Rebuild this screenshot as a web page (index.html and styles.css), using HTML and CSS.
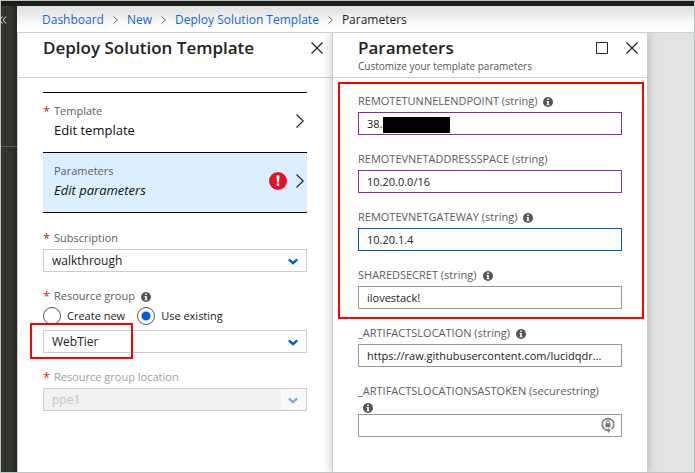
FILE: index.html
```html
<!DOCTYPE html>
<html lang="en">
<head>
<meta charset="utf-8">
<title>Parameters</title>
<link rel="stylesheet" href="styles.css">
</head>
<body>
<svg class="defs" aria-hidden="true">
  <symbol id="info" viewBox="0 0 10 10"><circle cx="5" cy="5" r="5" fill="#555"/><path d="M4.2 1.5h1.6v1.6H4.2zM3.6 4h2.2v3.4h.7v.9h-3v-.9h.7V4.9h-.6z" fill="#fff"/></symbol>
  <symbol id="close" viewBox="0 0 12 12"><path d="M.5.5l11 11M11.5.5l-11 11" fill="none" stroke="#222" stroke-width="1.2"/></symbol>
  <symbol id="next" viewBox="0 0 8 14"><path d="M.5.5L7.2 7 .5 13.5" fill="none" stroke="#222" stroke-width="1.2"/></symbol>
  <symbol id="sep" viewBox="0 0 5 8"><path d="M.5.5L4.4 4 .5 7.5" fill="none" stroke="#666"/></symbol>
  <symbol id="down" viewBox="0 0 10 7"><path d="M.8 1.3L5 5.2l4.2-3.9" fill="none" stroke="currentColor" stroke-width="2.4"/></symbol>
</svg>
<div class="portal">
  <div class="topbar"></div>
  <div class="body">
    <nav class="sidebar" aria-label="Menu">
      <button class="collapse" aria-label="Expand menu"><svg width="8" height="8" viewBox="0 0 8 8"><path d="M3.5.5L.5 4l3 3.5M7 .5L4 4l3 3.5" fill="none" stroke="#ddd"/></svg></button>
    </nav>
    <main class="main">
      <nav class="crumbs" aria-label="Breadcrumb">
        <a href="#">Dashboard</a><svg width="5" height="8"><use href="#sep"/></svg>
        <a href="#">New</a><svg width="5" height="8"><use href="#sep"/></svg>
        <a href="#">Deploy Solution Template</a><svg width="5" height="8"><use href="#sep"/></svg>
        <span>Parameters</span>
      </nav>
      <div class="blades">
        <section class="blade">
          <header class="head">
            <h1>Deploy Solution Template</h1>
            <div class="tools"><button aria-label="Close"><svg width="12" height="12"><use href="#close"/></svg></button></div>
          </header>
          <div class="content deploy">
            <div class="steps">
              <button class="step">
                <span class="star">*</span>
                <span class="text"><span class="name">Template</span><span class="value">Edit template</span></span>
                <svg width="8" height="14"><use href="#next"/></svg>
              </button>
              <button class="step selected">
                <span class="star"></span>
                <span class="text"><span class="name">Parameters</span><em class="value">Edit parameters</em></span>
                <svg class="error" width="18" height="18" viewBox="0 0 18 18"><circle cx="9" cy="9" r="9" fill="#e81123"/><path d="M7.5 3.5h3l-.5 7H8zM7.8 11.6h2.4v2.4H7.8z" fill="#fff"/></svg>
                <svg width="8" height="14"><use href="#next"/></svg>
              </button>
            </div>
            <div class="field">
              <label class="label" for="sub"><span class="star">*</span>Subscription</label>
              <div class="select"><select id="sub"><option>walkthrough</option></select><svg width="10" height="7"><use href="#down"/></svg></div>
            </div>
            <div class="field">
              <label class="label" for="rg"><span class="star">*</span>Resource group<svg class="info" width="10" height="10"><use href="#info"/></svg></label>
              <div class="radios">
                <label><input type="radio" name="mode">Create new</label>
                <label><input type="radio" name="mode" checked>Use existing</label>
              </div>
              <div class="select marked"><select id="rg"><option>WebTier</option></select><svg width="10" height="7"><use href="#down"/></svg></div>
            </div>
            <div class="field disabled">
              <label class="label" for="loc"><span class="star">*</span>Resource group location</label>
              <div class="select"><select id="loc" disabled><option>ppe1</option></select><svg width="10" height="7"><use href="#down"/></svg></div>
            </div>
          </div>
        </section>
        <section class="blade">
          <header class="head">
            <h1>Parameters</h1>
            <p>Customize your template parameters</p>
            <div class="tools">
              <button aria-label="Maximize"><svg width="12" height="12" viewBox="0 0 12 12"><path d="M.5.5h11v11H.5z" fill="none" stroke="#222"/></svg></button>
              <button aria-label="Close"><svg width="12" height="12"><use href="#close"/></svg></button>
            </div>
          </header>
          <div class="content params">
            <div class="group">
              <div class="field">
                <label class="label" for="p1">REMOTETUNNELENDPOINT (string)<svg class="info" width="10" height="10"><use href="#info"/></svg></label>
                <div class="box"><input class="edited" id="p1" type="text" value="38."><span class="redacted"></span></div>
              </div>
              <div class="field">
                <label class="label" for="p2">REMOTEVNETADDRESSSPACE (string)</label>
                <div class="box"><input class="edited" id="p2" type="text" value="10.20.0.0/16"></div>
              </div>
              <div class="field">
                <label class="label" for="p3">REMOTEVNETGATEWAY (string)<svg class="info" width="10" height="10"><use href="#info"/></svg></label>
                <div class="box"><input class="active" id="p3" type="text" value="10.20.1.4"></div>
              </div>
              <div class="field">
                <label class="label" for="p4">SHAREDSECRET (string)<svg class="info" width="10" height="10"><use href="#info"/></svg></label>
                <div class="box"><input id="p4" type="text" value="ilovestack!"></div>
              </div>
            </div>
            <div class="field">
              <label class="label" for="p5">_ARTIFACTSLOCATION (string)<svg class="info" width="10" height="10"><use href="#info"/></svg></label>
              <div class="box"><input id="p5" type="text" value="https://raw.githubusercontent.com/lucidqdr..."></div>
            </div>
            <div class="field">
              <label class="label wrap" for="p6"><span>_ARTIFACTSLOCATIONSASTOKEN (securestring)</span><svg class="info" width="10" height="10"><use href="#info"/></svg></label>
              <div class="box"><input id="p6" type="password"><svg class="lock" width="14" height="16" viewBox="0 0 14 16"><path d="M3.5 12A5.8 5.8 0 1 1 10.5 12" fill="none" stroke="#888" stroke-width="1.8"/><path d="M4.5 6.3h5v4h-5z" fill="#777"/><path d="M5.4 7V5.2a1.6 1.6 0 0 1 3.2 0V7" fill="none" stroke="#777"/><path d="M3.8 11.5L7 12.2V10.8l3 2.6-3 2.6v-1.6l-3.6-1z" fill="#888"/></svg></div>
            </div>
          </div>
        </section>
        <div class="rest"></div>
      </div>
    </main>
  </div>
</div>
</body>
</html>
```
FILE: styles.css
```css
*, ::before, ::after { box-sizing: border-box; }
body {
  margin: 0;
  font: 12px/16px "Open Sans", "Noto Sans", sans-serif;
  color: #222;
}
button { border: 0; padding: 0; background: none; font: inherit; color: inherit; text-align: left; }
svg { display: block; flex: none; }
.defs { position: absolute; width: 0; height: 0; }

.portal { display: flex; flex-direction: column; min-height: 100vh; border: 1px solid #bfc3bf; }
.topbar { height: 5px; background: #1c1e1c; }
.body { flex: 1; display: flex; }
.sidebar { width: 16px; background: linear-gradient(to right, #33342e 60%, #252622); }
.collapse { display: block; width: 100%; height: 141px; border-bottom: 1px solid #5a5b57; }
.collapse svg { margin: 0 0 112px -2px; }
.main { flex: 1; min-width: 0; display: flex; flex-direction: column; }

.crumbs {
  display: flex; align-items: center; gap: 9px;
  height: 27px; padding: 2px 0 0 25px;
  background: linear-gradient(#dedede, #fff 80%);
  border-bottom: 1px solid #cfcfcf;
}
.crumbs a { color: #1465dc; text-decoration: none; }

.blades { flex: 1; display: grid; grid-template-columns: 315fr 315fr 47fr; }
.blade { background: #fff; border-left: 1px solid #ccc; }
.blade + .blade { box-shadow: 0 0 10px rgba(0, 0, 0, .25); clip-path: inset(0 -12px 0 -12px); }
.rest { background: #e3e3e3; }
.head { position: relative; height: 45px; padding: 5px 0 0 25px; border-bottom: 1px solid #d0d0d0; }
.head h1 { margin: 0; font-size: 17px; line-height: 20px; font-weight: 600; }
.head p { margin: 0; font-size: 10px; line-height: 16px; color: #555; }
.tools { position: absolute; top: 9px; right: 9px; display: flex; gap: 18px; }
.content { padding: 14px 25px 0; }
.params { padding-top: 15px; }

.steps { border-top: 1px solid #000; margin-bottom: 17px; }
.step {
  display: flex; align-items: center;
  width: 100%; height: 60px; padding: 0 3px 4px 0;
  border-bottom: 1px solid #000;
}
.step.selected { background: #dceffe; }
.step .text { flex: 1; display: flex; flex-direction: column; gap: 3px; }
.step .star { align-self: flex-start; margin-top: 10px; }
.name { font-size: 11px; color: #5c5c5c; }
.step .value { font-size: 13px; color: #111; }
.error { margin-right: 9px; }
.star { color: #e81123; width: 11px; font-size: 13px; }

.field { margin-bottom: 16px; }
.label { display: flex; align-items: center; height: 16px; margin-bottom: 3px; font-size: 11px; color: #5c5c5c; }
.label.wrap { flex-wrap: wrap; height: auto; margin-bottom: 1px; }
.wrap span { flex: 0 0 100%; }
.info { margin: 2px 0 0 6px; }
.wrap .info { margin: 4px 0 0 5px; }
.radios { display: flex; gap: 12px; padding-bottom: 5px; font-size: 11px; }
.radios label { display: flex; align-items: center; gap: 6px; }
.radios input {
  appearance: none; width: 18px; height: 18px; margin: 0;
  border: 1px solid #555; border-radius: 50%; background: #fff;
}
.radios input:checked { background: radial-gradient(circle, #015cda 4px, #fff 5px); }

.select, .box { position: relative; }
.select select, .box input {
  appearance: none; display: block; width: 100%; height: 23px;
  margin: 0; padding: 0 8px; border: 1px solid #999; border-radius: 0;
  background: #fff; font: inherit; color: #222; outline: 0;
}
.box input { font-size: 11px; }
.select select { border-color: #ccc; }
.select svg { position: absolute; right: 9px; top: 9px; color: #015cda; pointer-events: none; }
.box .edited { border-color: #8a2da5; }
.box .active { border-color: #0058ad; }
.disabled .label { color: #a0a0a0; }
.disabled select { background: linear-gradient(to left, #f9f9f9 25px, #f1f1f1 25px); color: #c4c4c4; opacity: 1; }
.disabled .select svg { color: #80adec; }
.lock { position: absolute; right: 7px; top: 3px; }
.redacted { position: absolute; left: 25px; top: 5px; width: 67px; height: 16px; background: #000; }

.group { position: relative; }
.group::after, .marked::after { content: ""; position: absolute; border: 2px solid #f00; pointer-events: none; }
.group::after { inset: -11px -22px -10px -20px; }
.marked::after { left: -13px; top: -7px; width: 103px; height: 36px; }
```
